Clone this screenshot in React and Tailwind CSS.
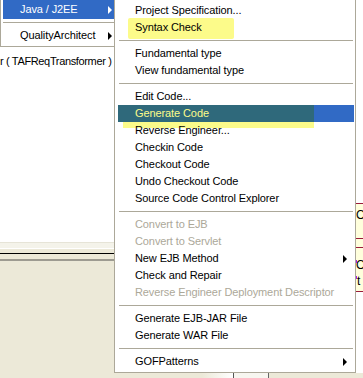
import React from "react";

const Arrow = ({ white }) => (
  <div
    className={
      "w-0 h-0 border-y-[4px] border-y-transparent border-l-[4px] " +
      (white ? "border-l-white" : "border-l-black")
    }
  />
);

const Sep = () => (
  <div className="h-[9px] pt-[4px] pl-[4px] pr-[2px]">
    <div className="h-px bg-[#ACA899]" />
  </div>
);

const Row = ({ children, disabled, arrow }) => (
  <div
    className={
      "h-[17px] flex items-center pl-[20px] whitespace-nowrap " +
      (disabled ? "text-[#ACA899]" : "text-black")
    }
  >
    <span className="relative">{children}</span>
    {arrow && (
      <div className="ml-auto mr-[8px]">
        <Arrow />
      </div>
    )}
  </div>
);

export default function App() {
  return (
    <div className="w-[363px] h-[378px] overflow-hidden flex bg-[#ECE9D8] font-['Liberation_Sans',sans-serif] text-[11px] leading-none tracking-[-0.1px]">
      {/* left column */}
      <div className="w-[114px] flex flex-col shrink-0">
        <div className="h-[47px] bg-white border-l border-b border-[#ACA899] flex flex-col">
          <div className="h-[19px] ml-[2px] bg-[#316AC5] text-white flex items-center pl-[17px] pr-[2px]">
            <span>Java / J2EE</span>
            <div className="ml-auto">
              <Arrow white />
            </div>
          </div>
          <div className="h-[8px] pt-[3px] pl-[2px]">
            <div className="h-px bg-[#ACA899]" />
          </div>
          <div className="h-[17px] flex items-center pl-[19px] pr-[2px]">
            <span>QualityArchitect</span>
            <div className="ml-auto">
              <Arrow />
            </div>
          </div>
        </div>
        <div className="h-[195px] bg-white pt-[9px] whitespace-nowrap text-black tracking-[-0.35px] overflow-hidden">
          r ( TAFReqTransformer )
        </div>
        <div className="h-px bg-[#E6E4D7]" />
        <div className="h-[5px] bg-[#F4F3EA]" />
        <div className="h-px bg-white" />
        <div className="h-[4px] bg-[#ECE9D8]" />
        <div className="h-px bg-black" />
        <div className="h-[5px] bg-[#ECE9D8]" />
        <div className="h-[2px] bg-[#9D9B91]" />
        <div className="flex-1 bg-[#ECE9D8]" />
      </div>

      {/* submenu column */}
      <div className="w-[242px] flex flex-col shrink-0">
        <div className="h-[373px] bg-white border-l border-r border-b border-[#ACA899] pt-[2px] flex flex-col">
          <Row>Project Specification...</Row>
          <div className="relative h-[17px] flex items-center pl-[20px] whitespace-nowrap">
            <div className="absolute left-[13px] top-[-1px] w-[106px] h-[21px] bg-[#FCFB8A] rounded-[2px]" />
            <span className="relative">Syntax Check</span>
          </div>
          <Sep />
          <Row>Fundamental type</Row>
          <Row>View fundamental type</Row>
          <Sep />
          <Row>Edit Code...</Row>
          <div className="relative h-[17px] ml-[3px] mr-[1px] bg-[#316AC5] flex items-center pl-[17px] whitespace-nowrap">
            <div className="absolute left-0 top-0 w-[196px] h-[17px] bg-[#2F697B]" />
            <div className="absolute left-[5px] top-[17px] w-[191px] h-[6px] bg-[#FCFB8A]" />
            <span className="relative text-[#FCFB8A]">Generate Code</span>
          </div>
          <div className="relative h-[17px] flex items-center pl-[20px] whitespace-nowrap">
            <span className="relative">Reverse Engineer...</span>
          </div>
          <Row>Checkin Code</Row>
          <Row>Checkout Code</Row>
          <Row>Undo Checkout Code</Row>
          <Row>Source Code Control Explorer</Row>
          <Sep />
          <Row disabled>Convert to EJB</Row>
          <Row disabled>Convert to Servlet</Row>
          <Row arrow>New EJB Method</Row>
          <Row>Check and Repair</Row>
          <Row disabled>Reverse Engineer Deployment Descriptor</Row>
          <Sep />
          <Row>Generate EJB-JAR File</Row>
          <Row>Generate WAR File</Row>
          <Sep />
          <Row arrow>GOFPatterns</Row>
        </div>
        <div className="flex-1 flex bg-[#ECE9D8]">
          <div className="w-[88px]" />
          <div className="w-[31px] bg-gradient-to-r from-[#ECE9D8] to-white" />
          <div className="w-px bg-[#555]" />
          <div className="w-[34px] bg-[#F7F6F0]" />
          <div className="w-px bg-[#666]" />
        </div>
      </div>

      {/* right strip */}
      <div className="flex-1 flex flex-col overflow-hidden">
        <div className="h-[203px] bg-white" />
        <div className="h-[89px] bg-[#FFFFDC] border-t border-b border-[#9A1B3A] flex flex-col whitespace-nowrap text-black">
          <div className="h-[34px] pt-[5px] text-[12px]">O</div>
          <div className="h-px bg-[#9A1B3A]" />
          <div className="h-[8px]" />
          <div className="h-px bg-[#9A1B3A]" />
          <div className="relative pt-[9px] text-[12px] leading-[16px]">
            <div className="absolute left-0 top-[12px] w-px h-[3px] bg-[#A020F0]" />
            <div className="absolute left-0 top-[28px] w-px h-[3px] bg-[#A020F0]" />
            <div>O</div>
            <div className="pl-[1px]">t</div>
          </div>
        </div>
        <div className="h-[81px] bg-white" />
        <div className="flex-1 bg-[#ECE9D8]" />
      </div>
    </div>
  );
}
